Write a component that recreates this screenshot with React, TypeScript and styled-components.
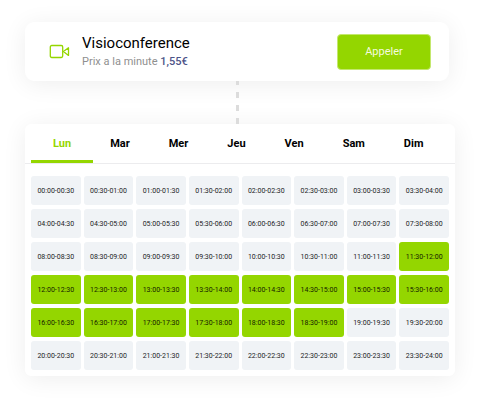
import React, { useState } from "react";
import styled, { createGlobalStyle } from "styled-components";

const GlobalStyle = createGlobalStyle`
  *, *::before, *::after { box-sizing: border-box; }
  body {
    margin: 0;
    background: #fff;
    color: #000;
    font-family: Roboto, "Liberation Sans", sans-serif;
  }
  button { font-family: inherit; cursor: pointer; }
`;

const GREEN = "#94d600";

const Page = styled.main`
  padding: 22px 25px 27px;
`;

const Card = styled.section`
  background: #fff;
  box-shadow: 0 3px 24px rgba(0, 0, 0, 0.07);
`;

const CallCard = styled(Card)`
  display: flex;
  align-items: center;
  gap: 12px;
  height: 59px;
  margin-right: 6px;
  padding: 0 18px 0 24px;
  border-radius: 9px;
`;

const CallText = styled.div`
  flex: 1;
`;

const Title = styled.h1`
  margin: 0;
  font-size: 15px;
  line-height: 19px;
  font-weight: 400;
`;

const Price = styled.p`
  margin: 0;
  font-size: 11px;
  line-height: 17px;
  color: #8f8f8f;
`;

const Amount = styled.span`
  color: #4d5488;
  font-weight: 500;
`;

const CallButton = styled.button`
  width: 94px;
  height: 36px;
  padding: 0;
  border: 1px solid #c4e86e;
  border-radius: 4px;
  background: ${GREEN};
  color: #f4fbdf;
  font-size: 11px;
`;

const Connector = styled.div`
  display: flex;
  justify-content: center;
  height: 43px;
  margin-right: 6px;

  &::before {
    content: "";
    width: 3px;
    background: repeating-linear-gradient(
      to bottom,
      #dcdcdc 0 4px,
      transparent 4px 11px,
      #dcdcdc 11px 13px
    );
  }
`;

const Planner = styled(Card)`
  padding-bottom: 6px;
  border-radius: 6px;
`;

const Tabs = styled.div`
  display: flex;
  height: 40px;
  padding: 0 6px;
  border-bottom: 1px solid #ececee;
`;

const Tab = styled.button<{ $active: boolean }>`
  height: 39px;
  padding: 3px 22px 0;
  border: 0;
  border-bottom: 3px solid ${(p) => (p.$active ? GREEN : "transparent")};
  border-radius: 2px 2px 0 0;
  background: none;
  color: ${(p) => (p.$active ? GREEN : "#000")};
  font-size: 11px;
  font-weight: 700;

  & + & {
    margin-left: -5px;
  }
`;

const Slots = styled.div`
  display: grid;
  grid-template-columns: repeat(8, minmax(0, 1fr));
  gap: 4px 3px;
  padding: 12px 6px 0;
`;

const Slot = styled.button<{ $selected: boolean }>`
  height: 29px;
  padding: 0;
  border: 0;
  border-radius: 3px;
  background: ${(p) => (p.$selected ? GREEN : "#f0f3f6")};
  color: ${(p) => (p.$selected ? "#141d00" : "#1c1d1f")};
  font-size: 7px;
  white-space: nowrap;
`;

const CameraIcon = () => (
  <svg width="21" height="15" viewBox="0 0 21 15" fill="none" stroke={GREEN} strokeLinejoin="round" aria-hidden="true">
    <rect x="1.3" y="1.5" width="12.4" height="12" rx="1.4" strokeWidth="1.3" />
    <path d="M14.4 7.5 L19.5 3.8 V11.4 Z" strokeWidth="1.3" />
  </svg>
);

const DAYS = ["Lun", "Mar", "Mer", "Jeu", "Ven", "Sam", "Dim"];

const time = (half: number) =>
  `${String(Math.floor(half / 2)).padStart(2, "0")}:${half % 2 ? "30" : "00"}`;

const SLOTS = Array.from({ length: 48 }, (_, i) => `${time(i)}-${time(i + 1)}`);

export default function App() {
  const [day, setDay] = useState(0);
  const [selected, setSelected] = useState(() => SLOTS.map((_, i) => i >= 23 && i <= 37));

  const toggle = (index: number) =>
    setSelected((current) => current.map((on, i) => (i === index ? !on : on)));

  return (
    <Page>
      <GlobalStyle />
      <CallCard>
        <CameraIcon />
        <CallText>
          <Title>Visioconference</Title>
          <Price>
            Prix a la minute <Amount>1,55€</Amount>
          </Price>
        </CallText>
        <CallButton type="button">Appeler</CallButton>
      </CallCard>
      <Connector />
      <Planner>
        <Tabs role="tablist">
          {DAYS.map((name, i) => (
            <Tab
              key={name}
              type="button"
              role="tab"
              aria-selected={i === day}
              $active={i === day}
              onClick={() => setDay(i)}
            >
              {name}
            </Tab>
          ))}
        </Tabs>
        <Slots>
          {SLOTS.map((label, i) => (
            <Slot
              key={label}
              type="button"
              aria-pressed={selected[i]}
              $selected={selected[i]}
              onClick={() => toggle(i)}
            >
              {label}
            </Slot>
          ))}
        </Slots>
      </Planner>
    </Page>
  );
}
